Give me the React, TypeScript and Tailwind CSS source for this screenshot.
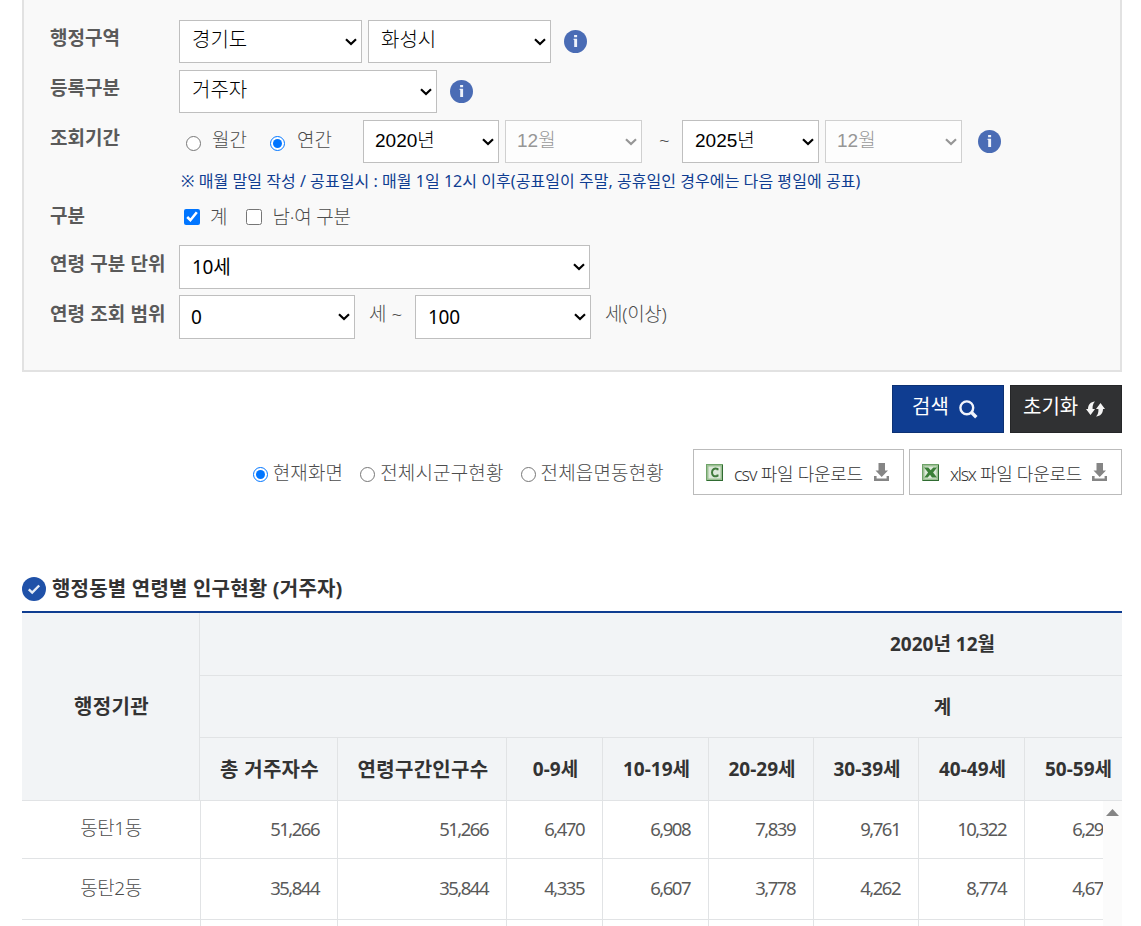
import type { ReactNode } from 'react';
import clsx from 'clsx';

const COLUMNS = [
  { label: '총 거주자수', width: 'w-[138px]', text: 'text-[20px] tracking-[0.3px]' },
  { label: '연령구간인구수', width: 'w-[169px]', text: 'text-[20px] tracking-[0.3px]' },
  { label: '0-9세', width: 'w-[96px]', text: 'text-[19px]' },
  { label: '10-19세', width: 'w-[106px]', text: 'text-[19px]' },
  { label: '20-29세', width: 'w-[105px]', text: 'text-[19px]' },
  { label: '30-39세', width: 'w-[105px]', text: 'text-[19px]' },
  { label: '40-49세', width: 'w-[106px]', text: 'text-[19px]' },
  { label: '50-59세', width: 'w-[106px]', text: 'text-[19px]' },
];

const ROWS = [
  { name: '동탄1동', height: 'h-[58px]', values: ['51,266', '51,266', '6,470', '6,908', '7,839', '9,761', '10,322', '6,290'] },
  { name: '동탄2동', height: 'h-[61px]', values: ['35,844', '35,844', '4,335', '6,607', '3,778', '4,262', '8,774', '4,672'] },
  { name: '', height: 'h-[58px]', values: ['', '', '', '', '', '', '', ''] },
];

function Select({ value, box, className, disabled }: { value: string; box: string; className: string; disabled?: boolean }) {
  return (
    <div className={clsx('relative shrink-0', box, disabled && 'opacity-70')}>
      <select
        disabled={disabled}
        className={clsx('size-full appearance-none border border-[#bfbfbf] bg-white text-black disabled:text-[#6d6d6d] disabled:opacity-100', className)}
      >
        <option>{value}</option>
      </select>
      <svg className="pointer-events-none absolute top-[18px] right-[5px]" width="12" height="8" viewBox="0 0 12 8">
        <path d="M1 1.300l5 4.700 5-4.700" fill="none" stroke={disabled ? '#6d6d6d' : '#000'} strokeWidth="2.200" />
      </svg>
    </div>
  );
}

function Label({ children, className }: { children: ReactNode; className?: string }) {
  return <div className={clsx('w-[129px] shrink-0 text-[19px] leading-7 font-bold whitespace-nowrap text-[#5a5a5a]', className)}>{children}</div>;
}

function InfoIcon({ className }: { className?: string }) {
  return (
    <svg className={clsx('shrink-0', className)} width="23" height="23" viewBox="0 0 23 23">
      <circle cx="11.5" cy="11.5" r="11.5" fill="#4a6cb5" />
      <path d="M10.1 5h3v2.2h-3zM9.6 8.7h3.5v8.4h-2.9v-7.2h-.6z" fill="#eef2fa" />
    </svg>
  );
}

function DownloadIcon() {
  return (
    <svg width="16" height="19" viewBox="0 0 16 19" className="shrink-0">
      <path d="M4.5 0h6.5v7.5h3L7.7 14 1.5 7.5h3z" fill="#858585" />
      <path d="M0 13h2.6v2.5h10V13H15v5H0z" fill="#858585" />
    </svg>
  );
}

function FileIcon({ type }: { type: 'csv' | 'xlsx' }) {
  return (
    <svg width="17" height="17" viewBox="0 0 17 17" className="shrink-0">
      <rect width="17" height="17" fill="#6fa369" />
      <rect x="1" y="1" width="15" height="15" fill="#9cc094" />
      <rect x="2.5" y="2.5" width="12" height="12" fill="#dde9da" />
      <path d="M16 1h1v16H1v-1h15z" fill="#2f6b31" />
      {type === 'csv' ? (
        <path d="M11.5 6.2V4.9C8.4 3.9 6 5.4 6 8.5s2.2 4.7 5.5 3.4v-1.3" fill="none" stroke="#3f7a3b" strokeWidth="2" />
      ) : (
        <path d="M2 3.5h4.3l2.4 2.8 2.6-2.8H15l-3.9 4.9 3.9 5H10l-2-2.6-2.3 2.6H2.3l3.8-5z" fill="#3b8038" />
      )}
    </svg>
  );
}

function SearchIcon() {
  return (
    <svg width="19" height="19" viewBox="0 0 19 19" fill="none" stroke="#f1f4fb">
      <circle cx="7.8" cy="7.8" r="6.4" strokeWidth="2.4" />
      <path d="M12.3 12.3l5 5" strokeWidth="3.4" />
    </svg>
  );
}

function ResetIcon() {
  return (
    <svg width="19" height="16" viewBox="0 0 19 16" fill="#f4f4f4">
      <path d="M9 .5C4.7.7 2 3.8 2 8H0l4.5 6L9 8H6.6C6.4 5 7 2.5 9 .5z" />
      <path d="M10 15.5c4.3-.2 7-3.3 7-7.5h2l-4.5-6L10 8h2.4c.2 3-.4 5.500-2.400 7.500z" />
    </svg>
  );
}

function HeadCell({ children, className }: { children: ReactNode; className?: string }) {
  return (
    <div className={clsx('flex shrink-0 items-center justify-center border-r border-b border-[#e1e3e5] pt-px pl-0.5 font-bold whitespace-nowrap text-[#333]', className)}>
      {children}
    </div>
  );
}

export default function App() {
  return (
    <div className="h-[926px] w-[1141px] overflow-hidden bg-white pl-[22px] font-['Noto_Sans','Noto_Sans_CJK_KR',sans-serif] text-[19px] font-light text-[#4c4c4c]">
      {/* 검색 조건 */}
      <div className="h-[372px] w-[1100px] border-2 border-t-0 border-[#e2e2e2] bg-[#f9f9f9] pt-5 pl-[26px]">
        <div className="flex h-[50px]">
          <Label className="pt-1">행정구역</Label>
          <Select value="경기도" box="h-[43px] w-[183px]" className="pb-[3px] pl-3 text-[20px]" />
          <Select value="화성시" box="ml-1.5 h-[43px] w-[183px]" className="pb-[3px] pl-3 text-[20px]" />
          <InfoIcon className="mt-2.5 ml-[13px]" />
        </div>
        <div className="flex h-[50px]">
          <Label className="pt-1">등록구분</Label>
          <Select value="거주자" box="h-[43px] w-[258px]" className="pb-[3px] pl-3 text-[20px]" />
          <InfoIcon className="mt-2.5 ml-[13px]" />
        </div>
        <div className="flex h-[50px]">
          <Label className="pt-1">조회기간</Label>
          <label className="flex h-10 w-[84px] items-center whitespace-nowrap">
            <input type="radio" name="period" className="mt-1.5 ml-[7px] size-[15px]" />
            <span className="ml-[11px]">월간</span>
          </label>
          <label className="flex h-10 w-[100px] items-center whitespace-nowrap">
            <input type="radio" name="period" defaultChecked className="mt-1.5 ml-[7px] size-[15px]" />
            <span className="ml-3">연간</span>
          </label>
          <Select value="2020년" box="h-[43px] w-[136px]" className="pl-[11px] font-['Liberation_Sans','Noto_Sans_CJK_KR',sans-serif] text-[19px]" />
          <Select value="12월" disabled box="ml-1.5 h-[43px] w-[137px]" className="pl-[11px] font-['Liberation_Sans','Noto_Sans_CJK_KR',sans-serif] text-[19px]" />
          <span className="w-10 pt-1.5 pl-[5px] text-center">~</span>
          <Select value="2025년" box="h-[43px] w-[137px]" className="pl-3 font-['Liberation_Sans','Noto_Sans_CJK_KR',sans-serif] text-[19px]" />
          <Select value="12월" disabled box="ml-1.5 h-[43px] w-[137px]" className="pl-[11px] font-['Liberation_Sans','Noto_Sans_CJK_KR',sans-serif] text-[19px]" />
          <InfoIcon className="mt-2.5 ml-4" />
        </div>
        <p className="h-[33px] pl-[131px] text-[16px] leading-[22px] font-normal tracking-[0.05px] whitespace-nowrap text-[#0f3d91]">
          ※ 매월 말일 작성 / 공표일시 : 매월 1일 12시 이후(공표일이 주말, 공휴일인 경우에는 다음 평일에 공표)
        </p>
        <div className="flex h-[42px]">
          <Label className="-mt-px">구분</Label>
          <label className="flex h-7 items-center">
            <input type="checkbox" defaultChecked className="ml-[5px] size-4" />
            <span className="ml-2.5">계</span>
          </label>
          <label className="flex h-7 items-center">
            <input type="checkbox" className="ml-[19px] size-4" />
            <span className="ml-2.5 tracking-[-0.2px]">남·여 구분</span>
          </label>
        </div>
        <div className="flex h-[50px]">
          <Label className="pt-[5px] tracking-[0.1px]">연령 구분 단위</Label>
          <Select value="10세" box="h-11 w-[411px]" className="pl-3 text-[19px] font-normal tracking-[-0.3px]" />
        </div>
        <div className="flex h-[50px]">
          <Label className="pt-[5px] tracking-[0.1px]">연령 조회 범위</Label>
          <Select value="0" box="h-11 w-[176px]" className="pl-[11px] text-[19px] font-normal tracking-[-0.3px]" />
          <span className="w-[60px] pt-[5px] pl-3.5 whitespace-nowrap">세 ~</span>
          <Select value="100" box="h-11 w-[176px]" className="pl-3 text-[19px] font-normal tracking-[-0.3px]" />
          <span className="pt-[5px] pl-3.5 tracking-[-0.3px]">세(이상)</span>
        </div>
      </div>

      {/* 버튼 */}
      <div className="flex w-[1100px] justify-end gap-1.5 pt-[13px]">
        <button className="flex h-12 w-28 items-center gap-2.5 border border-[#0c3174] bg-[#0f3d91] pl-[19px] text-[20px] font-normal text-white">
          <span className="-mt-[5px]">검색</span>
          <SearchIcon />
        </button>
        <button className="flex h-12 w-28 items-center gap-2 border border-[#252628] bg-[#303133] pl-3 text-[20px] font-normal text-white">
          <span className="-mt-[5px]">초기화</span>
          <ResetIcon />
        </button>
      </div>

      {/* 다운로드 */}
      <div className="flex w-[1100px] items-center justify-end pt-4">
        {['현재화면', '전체시군구현황', '전체읍면동현황'].map((text, i) => (
          <label key={text} className="mr-[17px] flex items-center whitespace-nowrap">
            <input type="radio" name="scope" defaultChecked={i === 0} className="mt-1 size-[15px]" />
            <span className="mt-0.5 ml-[5px] tracking-[0.15px]">{text}</span>
          </label>
        ))}
        <button className="ml-3 flex h-[46px] w-[211px] items-center border border-[#bbb] pl-3 whitespace-nowrap text-[#333]">
          <FileIcon type="csv" />
          <span className="mt-1 mr-[11px] ml-[11px] text-[18px]"><span className="tracking-[-1px]">csv</span><span className="tracking-[-0.3px]"> 파일 다운로드</span></span>
          <DownloadIcon />
        </button>
        <button className="ml-[5px] flex h-[46px] w-[213px] items-center border border-[#bbb] pl-3 whitespace-nowrap text-[#333]">
          <FileIcon type="xlsx" />
          <span className="mt-1 mr-2.5 ml-[11px] text-[18px]"><span className="tracking-[-1.3px]">xlsx</span><span className="tracking-[-0.3px]"> 파일 다운로드</span></span>
          <DownloadIcon />
        </button>
      </div>

      <h2 className="mt-[79px] flex h-[37px] items-center gap-1.5 pb-2 text-[20px] font-bold tracking-[0.2px] text-[#333]">
        <svg width="24" height="24" viewBox="0 0 24 24">
          <circle cx="12" cy="12" r="12" fill="#1f51a8" />
          <path d="M6.8 12.3l3.4 3.2 7-7" fill="none" stroke="#e6edf8" strokeWidth="2.4" />
        </svg>
        <span>행정동별 연령별 인구현황 (거주자)</span>
      </h2>

      {/* 인구 현황 표 */}
      <div className="flex w-[1100px] overflow-hidden border-t-2 border-[#0f3d91] bg-[#f2f4f6]">
        <HeadCell className="h-[188px] w-[178px] text-[20px] tracking-[0.3px]">행정기관</HeadCell>
        <div className="w-[1484px] shrink-0">
          <HeadCell className="h-[63px]">2020년 12월</HeadCell>
          <HeadCell className="h-[62px]">계</HeadCell>
          <div className="flex">
            {COLUMNS.map((col) => (
              <HeadCell key={col.label} className={clsx('h-[63px]', col.width, col.text)}>{col.label}</HeadCell>
            ))}
          </div>
        </div>
      </div>
      <div className="flex w-[1100px]">
        <div className="w-[1081px] overflow-hidden">
          {ROWS.map((row, r) => (
            <div key={r} className={clsx('flex w-[1109px]', row.height)}>
              <div className="flex w-[179px] shrink-0 items-center justify-center border-r border-b border-[#e1e3e5] pb-0.5 tracking-[-0.4px]">{row.name}</div>
              {row.values.map((value, i) => (
                <div
                  key={i}
                  className={clsx(
                    'flex shrink-0 items-center justify-end border-r border-b border-[#e1e3e5] pr-[18px] pb-0.5 text-[18.5px] font-normal tracking-[-1.5px] text-[#5a5a5a]',
                    i === 0 ? 'w-[137px]' : COLUMNS[i].width,
                  )}
                >
                  {value}
                </div>
              ))}
            </div>
          ))}
        </div>
        <div className="w-[19px] bg-[#fbfbfb] pt-2 pl-[3px]">
          <svg width="13" height="7" viewBox="0 0 13 7">
            <path d="M6.5 0L13 7H0z" fill="#858585" />
          </svg>
        </div>
      </div>
    </div>
  );
}
